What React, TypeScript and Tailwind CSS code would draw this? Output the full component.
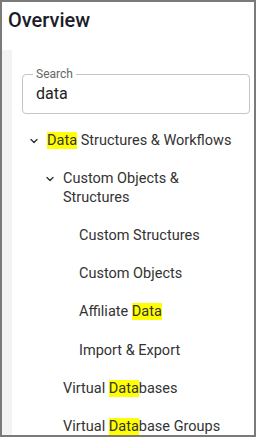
type Node = {
  label: string
  level: number
  open?: boolean
}

const tree: Node[] = [
  { label: 'Data Structures & Workflows', level: 1, open: true },
  { label: 'Custom Objects & Structures', level: 2, open: true },
  { label: 'Custom Structures', level: 3 },
  { label: 'Custom Objects', level: 3 },
  { label: 'Affiliate Data', level: 3 },
  { label: 'Import & Export', level: 3 },
  { label: 'Virtual Databases', level: 2 },
  { label: 'Virtual Database Groups', level: 2 }
]

const query = 'data'

// wraps the matching part of a label in a yellow mark
function Highlight({ text }: { text: string }) {
  const i = text.toLowerCase().indexOf(query)
  if (i < 0) return <>{text}</>
  return (
    <>
      {text.slice(0, i)}
      <mark className="bg-[#ffff00] text-inherit">{text.slice(i, i + query.length)}</mark>
      {text.slice(i + query.length)}
    </>
  )
}

function Chevron() {
  return (
    <svg width="10" height="10" viewBox="0 0 10 10" fill="none" className="ml-[2px]">
      <path d="M2 3.5 L5 6.5 L8 3.5" stroke="#333" strokeWidth="1.4" strokeLinecap="round" strokeLinejoin="round" />
    </svg>
  )
}

const indent: Record<number, string> = {
  1: 'pl-[15px]',
  2: 'pl-[31px]',
  3: 'pl-[47px]'
}

export default function App() {
  return (
    <div
      className="w-[256px] h-[437px] border-2 border-[#7a7a7a] bg-white flex flex-col overflow-hidden"
      style={{ fontFamily: 'Roboto, "Liberation Sans", sans-serif' }}
    >
      {/* Header */}
      <div className="h-[48px] shrink-0 pl-[6px] pt-[6px]">
        <h1 className="text-[20px] leading-[24px] font-medium text-[#1c1c28]">Overview</h1>
      </div>

      <div className="flex flex-1 min-h-0">
        <div className="w-[10px] shrink-0 bg-[#f3f3f3]" />

        <div className="flex-1 min-w-0 pr-[2px]">
          {/* Search */}
          <fieldset className="mt-[17px] ml-[10px] mr-[2px] border border-[#c4c4c4] rounded-[4px] pl-[13px] pr-[13px] pb-[9px]">
            <legend className="ml-[-3px] px-[3px] text-[12px] leading-[14px] text-[#666]">Search</legend>
            <div className="mt-[3px] text-[16px] leading-[20px] text-[#222]">{query}</div>
          </fieldset>

          {/* Tree */}
          <ul className="mt-[8px]">
            {tree.map((n) => (
              <li key={n.label} className={`flex items-start py-[10px] pr-[8px] ${indent[n.level]}`}>
                <span className="w-[20px] h-[18px] shrink-0 flex items-center">{n.open && <Chevron />}</span>
                <span className="text-[14.5px] leading-[18.3px] text-[#333]">
                  <Highlight text={n.label} />
                </span>
              </li>
            ))}
          </ul>
        </div>
      </div>
    </div>
  )
}
